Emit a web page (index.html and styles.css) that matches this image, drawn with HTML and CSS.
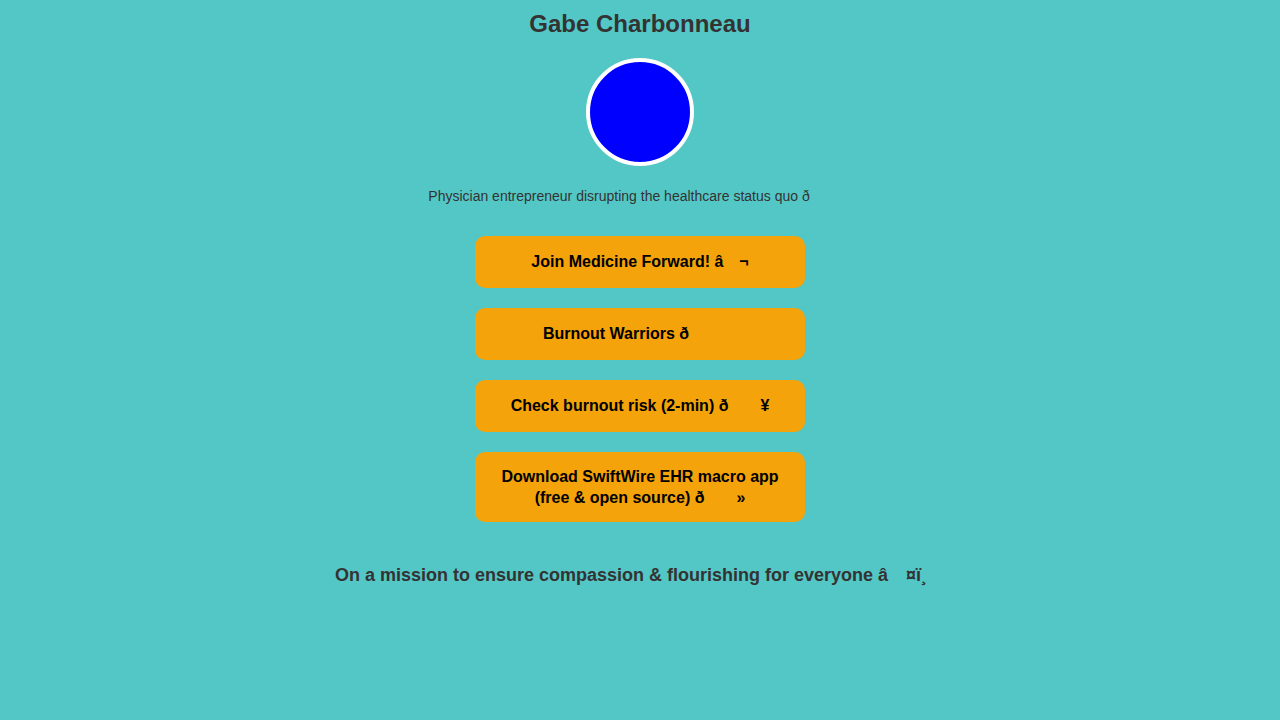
FILE: index.html
```html
<!DOCTYPE html>
<html>
<head>
<meta charset="utf-8">
<title>Gabe Charbonneau</title>
<link rel="stylesheet" href="styles.css">
</head>
<body>
<main class="page">
  <h1 class="name">Gabe Charbonneau</h1>
  <div class="avatar"></div>
  <p class="bio">Physician entrepreneur disrupting the healthcare status quo ð<span class="cc"></span><span class="cc"></span><span class="cc"></span></p>
  <nav class="links">
    <a class="btn" href="#">Join Medicine Forward! â<span class="cc"></span>¬</a>
    <a class="btn" href="#">Burnout Warriors ð<span class="cc"></span><span class="cc"></span><span class="cc"></span></a>
    <a class="btn" href="#">Check burnout risk (2-min) ð<span class="cc"></span><span class="cc"></span>¥</a>
    <a class="btn btn-wrap" href="#">Download SwiftWire EHR macro app (free &amp; open source) ð<span class="cc"></span><span class="cc"></span>»</a>
  </nav>
  <p class="mission">On a mission to ensure compassion &amp; flourishing for everyone â<span class="cc"></span>¤ï¸<span class="cc"></span></p>
</main>
</body>
</html>
```

FILE: styles.css
```css
html, body {
  margin: 0;
  padding: 0;
  background: #53c7c5;
  font-family: "Liberation Sans", Arial, sans-serif;
  color: #333;
}
.page {
  display: flex;
  flex-direction: column;
  align-items: center;
  padding-top: 10px;
}
.name {
  margin: 0;
  font-size: 24px;
  line-height: 28px;
  font-weight: bold;
}
.avatar {
  margin-top: 20px;
  width: 100px;
  height: 100px;
  border: 4px solid #fff;
  border-radius: 50%;
  background: #0000ff;
}
.bio {
  margin: 22px 0 0;
  font-size: 14px;
  line-height: 16px;
}
.cc {
  display: inline-block;
  width: 1em;
}
.links {
  margin-top: 32px;
  display: flex;
  flex-direction: column;
  gap: 20px;
  width: 330px;
}
.btn {
  display: block;
  box-sizing: border-box;
  width: 330px;
  padding: 17px 20px;
  background: #f5a30a;
  border-radius: 10px;
  color: #000;
  text-decoration: none;
  text-align: center;
  font-weight: bold;
  font-size: 16px;
  line-height: 18px;
}
.btn-wrap {
  padding-top: 14px;
  padding-bottom: 14px;
  line-height: 21px;
}
.mission {
  margin: 43px 0 0;
  font-size: 18px;
  line-height: 21px;
  font-weight: bold;
}
```
